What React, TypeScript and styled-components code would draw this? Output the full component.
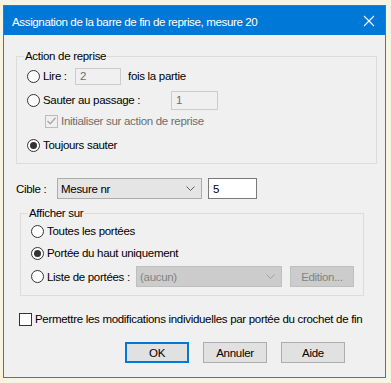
import React from 'react';
import styled, { createGlobalStyle } from 'styled-components';

const GlobalStyle = createGlobalStyle`
  html, body {
    margin: 0;
    padding: 0;
  }
  body {
    font-family: 'Liberation Sans', Arial, sans-serif;
    font-size: 11.5px;
    letter-spacing: -0.3px;
    color: #000;
  }
`;

const Desktop = styled.div`
  width: 391px;
  height: 383px;
  background: #f8f4e2;
  padding: 5px 0 0 3px;
  box-sizing: border-box;
`;

const Window = styled.div`
  width: 383px;
  height: 373px;
  box-sizing: border-box;
  border: 1px solid #1883d7;
  background: #f0f0f0;
  display: flex;
  flex-direction: column;
`;

const TitleBar = styled.div`
  height: 29px;
  background: #0078d7;
  color: #fff;
  display: flex;
  align-items: center;
  padding: 0 10px 0 8px;
  font-size: 11.6px;
  letter-spacing: -0.4px;
`;

const TitleText = styled.div`
  flex: 1;
  padding-top: 1px;
`;

const CloseIcon = styled.svg`
  width: 12px;
  height: 12px;
`;

const Body = styled.div`
  display: flex;
  flex-direction: column;
`;

const Group = styled.div<{ $left: number; $width: number; $top: number; $pb: number }>`
  display: flex;
  flex-direction: column;
  margin-left: ${(p) => p.$left}px;
  margin-top: ${(p) => p.$top}px;
  width: ${(p) => p.$width}px;
  box-sizing: border-box;
  border: 1px solid #dcdcdc;
  padding-bottom: ${(p) => p.$pb}px;
`;

const Legend = styled.div<{ $indent: number }>`
  align-self: flex-start;
  margin-top: -8px;
  margin-left: ${(p) => p.$indent}px;
  padding: 0 1px;
  height: 14px;
  line-height: 14px;
  background: #f0f0f0;
`;

const Row = styled.div<{ $top: number; $left: number; $h?: number }>`
  display: flex;
  align-items: center;
  height: ${(p) => p.$h ?? 20}px;
  margin-top: ${(p) => p.$top}px;
  padding-left: ${(p) => p.$left}px;
`;

const RadioCircle = styled.span<{ $checked?: boolean }>`
  width: 13px;
  height: 13px;
  box-sizing: border-box;
  border: 1px solid #333;
  border-radius: 50%;
  background: #fff;
  display: flex;
  align-items: center;
  justify-content: center;
  flex: none;
  margin-right: 3px;
  &::after {
    content: '';
    width: 7px;
    height: 7px;
    border-radius: 50%;
    background: ${(p) => (p.$checked ? '#333' : 'transparent')};
  }
`;

const CheckBox = styled.span<{ $disabled?: boolean }>`
  width: 13px;
  height: 13px;
  box-sizing: border-box;
  border: 1px solid ${(p) => (p.$disabled ? '#bcbcbc' : '#333')};
  background: ${(p) => (p.$disabled ? '#f0f0f0' : '#fff')};
  display: flex;
  align-items: center;
  justify-content: center;
  flex: none;
  margin-right: 3px;
`;

const Label = styled.span<{ $disabled?: boolean; $ml?: number; $w?: number }>`
  color: ${(p) => (p.$disabled ? '#6d6d6d' : '#000')};
  margin-left: ${(p) => p.$ml ?? 0}px;
  width: ${(p) => (p.$w ? `${p.$w}px` : 'auto')};
  flex: none;
  white-space: nowrap;
`;

const TextBox = styled.div<{ $disabled?: boolean; $w: number; $h: number }>`
  width: ${(p) => p.$w}px;
  height: ${(p) => p.$h}px;
  box-sizing: border-box;
  border: 1px solid ${(p) => (p.$disabled ? '#cccccc' : '#7a7a7a')};
  background: ${(p) => (p.$disabled ? '#f0f0f0' : '#fff')};
  color: ${(p) => (p.$disabled ? '#6d6d6d' : '#000')};
  display: flex;
  align-items: center;
  padding-left: 4px;
  flex: none;
`;

const Combo = styled.div<{ $disabled?: boolean; $w: number }>`
  width: ${(p) => p.$w}px;
  height: 21px;
  box-sizing: border-box;
  border: 1px solid ${(p) => (p.$disabled ? '#bfbfbf' : '#acacac')};
  background: ${(p) => (p.$disabled ? '#cccccc' : '#e5e5e5')};
  color: ${(p) => (p.$disabled ? '#838383' : '#000')};
  display: flex;
  align-items: center;
  padding: 0 6px 0 3px;
  flex: none;
`;

const ComboText = styled.span`
  flex: 1;
`;

const Chevron = ({ color }: { color: string }) => (
  <svg width="9" height="6" viewBox="0 0 9 6">
    <path d="M0.5 0.5 L4.5 4.5 L8.5 0.5" fill="none" stroke={color} strokeWidth="1" />
  </svg>
);

const Button = styled.div<{ $default?: boolean; $disabled?: boolean; $ml: number }>`
  width: 64px;
  height: 21px;
  margin-left: ${(p) => p.$ml}px;
  box-sizing: border-box;
  border: ${(p) =>
    p.$default ? '2px solid #0078d7' : p.$disabled ? '1px solid #bfbfbf' : '1px solid #adadad'};
  background: ${(p) => (p.$disabled ? '#cccccc' : '#e1e1e1')};
  color: ${(p) => (p.$disabled ? '#838383' : '#000')};
  display: flex;
  align-items: center;
  justify-content: center;
  flex: none;
`;

export default function App() {
  return (
    <>
      <GlobalStyle />
      <Desktop>
        <Window>
          <TitleBar>
            <TitleText>Assignation de la barre de fin de reprise, mesure 20</TitleText>
            <CloseIcon viewBox="0 0 12 12">
              <path d="M1 1 L11 11 M11 1 L1 11" stroke="#fff" strokeWidth="1.1" />
            </CloseIcon>
          </TitleBar>
          <Body>
            <Group $left={12} $width={361} $top={21} $pb={8}>
              <Legend $indent={7}>Action de reprise</Legend>
              <Row $top={3} $left={10}>
                <RadioCircle />
                <Label $w={32}>Lire :</Label>
                <TextBox $disabled $w={46} $h={17}>2</TextBox>
                <Label $ml={7}>fois la partie</Label>
              </Row>
              <Row $top={4} $left={10}>
                <RadioCircle />
                <Label $w={128}>Sauter au passage :</Label>
                <TextBox $disabled $w={47} $h={19}>1</TextBox>
              </Row>
              <Row $top={1} $left={28}>
                <CheckBox $disabled>
                  <svg width="9" height="8" viewBox="0 0 9 8">
                    <path d="M0.5 4 L3.3 6.8 L8.5 0.8" fill="none" stroke="#a7a7a7" strokeWidth="1.3" />
                  </svg>
                </CheckBox>
                <Label $disabled>Initialiser sur action de reprise</Label>
              </Row>
              <Row $top={4} $left={10}>
                <RadioCircle $checked />
                <Label>Toujours sauter</Label>
              </Row>
            </Group>

            <Row $top={14} $left={12} $h={21}>
              <Label $w={41}>Cible :</Label>
              <Combo $w={145}>
                <ComboText>Mesure nr</ComboText>
                <Chevron color="#606060" />
              </Combo>
              <Label $w={6} />
              <TextBox $w={49} $h={21}>5</TextBox>
            </Row>

            <Group $left={16} $width={344} $top={14} $pb={8}>
              <Legend $indent={7}>Afficher sur</Legend>
              <Row $top={1} $left={10}>
                <RadioCircle />
                <Label>Toutes les portées</Label>
              </Row>
              <Row $top={2} $left={10}>
                <RadioCircle $checked />
                <Label>Portée du haut uniquement</Label>
              </Row>
              <Row $top={3} $left={10} $h={21}>
                <RadioCircle />
                <Label $w={89}>Liste de portées :</Label>
                <Combo $disabled $w={146}>
                  <ComboText>(aucun)</ComboText>
                  <Chevron color="#a0a0a0" />
                </Combo>
                <Button $disabled $ml={8}>Edition...</Button>
              </Row>
            </Group>

            <Row $top={13} $left={15}>
              <CheckBox />
              <Label>Permettre les modifications individuelles par portée du crochet de fin</Label>
            </Row>

            <Row $top={13} $left={121} $h={21}>
              <Button $default $ml={0}>OK</Button>
              <Button $ml={14}>Annuler</Button>
              <Button $ml={14}>Aide</Button>
            </Row>
          </Body>
        </Window>
      </Desktop>
    </>
  );
}
